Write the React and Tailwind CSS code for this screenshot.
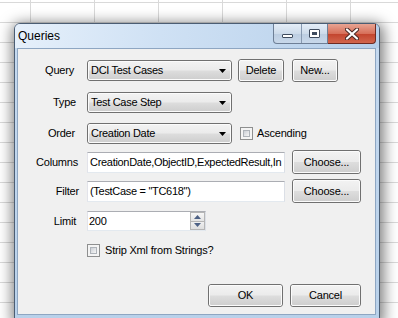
import React from "react";

const btnBg =
  "bg-[linear-gradient(to_bottom,#f2f2f2_0%,#ebebeb_48%,#dddddd_52%,#cfcfcf_100%)]";

function Btn({ children, className = "" }) {
  return (
    <div
      className={`rounded-[3px] border border-[#707070] ${className}`}
    >
      <div
        className={`flex h-full w-full items-center justify-center rounded-[2px] border border-[#fbfbfb] ${btnBg} text-[11px] tracking-[-0.2px] text-black`}
      >
        {children}
      </div>
    </div>
  );
}

function Combo({ text, className = "" }) {
  return (
    <div className={`rounded-[3px] border border-[#707070] ${className}`}>
      <div
        className={`flex h-full w-full items-center rounded-[2px] border border-[#fbfbfb] ${btnBg} pl-[2px] pr-[3px] text-[11px] tracking-[-0.3px] text-black`}
      >
        <span className="flex-1 whitespace-nowrap">{text}</span>
        <svg width="7" height="4" viewBox="0 0 7 4" className="mr-[1px]">
          <path d="M0 0H7L3.5 4Z" fill="#000" />
        </svg>
      </div>
    </div>
  );
}

function TextBox({ text, className = "" }) {
  return (
    <div
      className={`flex items-center overflow-hidden border border-t-[#abadb3] border-l-[#e2e3ea] border-r-[#dbdfe6] border-b-[#e3e9ef] bg-white pl-[2px] text-[11px] tracking-[-0.3px] text-black ${className}`}
    >
      <span className="whitespace-nowrap">{text}</span>
    </div>
  );
}

function Check() {
  return (
    <div className="h-[13px] w-[13px] border border-[#8e8f8f] bg-[#f4f4f4] p-[2px]">
      <div className="h-full w-full border border-[#aeb3b9] bg-[linear-gradient(135deg,#cbcfd5,#f6f6f6)]" />
    </div>
  );
}

function Label({ children, pr }) {
  return (
    <div className={`w-[62px] text-right text-[11px] tracking-[-0.2px] text-black ${pr}`}>
      {children}
    </div>
  );
}

export default function App() {
  return (
    <div
      className="relative h-[318px] w-[398px] overflow-hidden bg-white pl-[14px] pt-[23px] font-['Liberation_Sans',Arial,sans-serif] [background-image:linear-gradient(to_right,#d9d9d9_1px,transparent_1px),linear-gradient(to_bottom,#d9d9d9_1px,transparent_1px)] [background-size:64px_20px] [background-position:30px_2px]"
    >
      {/* window */}
      <div className="flex h-[297px] w-[366px] flex-col rounded-t-[6px] border border-[#4b5d73] bg-[linear-gradient(to_bottom,#c6daf0,#b9d1ea)] pb-[4px] shadow-[1px_3px_14px_3px_rgba(0,0,0,0.5)]">
        {/* title bar */}
        <div className="relative flex h-[24px] items-start rounded-t-[5px] bg-[linear-gradient(100deg,#e6f0fb_0%,#cfe1f4_40%,#b6cfea_100%)]">
          <div className="pl-[3px] pt-[5px] text-[12px] leading-[14px] text-black">
            Queries
          </div>
          <div className="ml-auto mr-[3px] flex h-[20px]">
            <div className="flex h-[20px] w-[55px] overflow-hidden rounded-bl-[4px] border border-t-0 border-[#6e7f96] bg-[linear-gradient(to_bottom,#e4edf7,#cddbea_50%,#bccde1_51%,#c8d8ea)]">
              <div className="flex w-[28px] items-end justify-center border-r border-[#8799b0] pb-[5px]">
                <div className="h-[4px] w-[11px] rounded-[1px] border border-[#3e4b5e] bg-white" />
              </div>
              <div className="flex flex-1 items-center justify-center">
                <div className="h-[9px] w-[11px] rounded-[1px] border border-[#3e4b5e] bg-white p-[2px]">
                  <div className="h-full w-full border border-[#3e4b5e] border-t-[2px] bg-[#d5e0ee]" />
                </div>
              </div>
            </div>
            <div className="flex h-[20px] w-[48px] items-center justify-center rounded-br-[4px] border border-l-0 border-t-0 border-[#6e2a22] bg-[linear-gradient(to_bottom,#e8a493,#d7705a_50%,#c2432d_51%,#d2664d)]">
              <svg width="14" height="12" viewBox="0 0 14 12">
                <path
                  d="M2 1.5L12 10.5M12 1.5L2 10.5"
                  stroke="#4a2a26"
                  strokeWidth="4.2"
                  strokeLinecap="round"
                />
                <path
                  d="M2 1.5L12 10.5M12 1.5L2 10.5"
                  stroke="#fff"
                  strokeWidth="2.2"
                  strokeLinecap="round"
                />
              </svg>
            </div>
          </div>
        </div>
        {/* client area */}
        <div className="ml-[2px] mr-[3px] flex flex-1 flex-col border border-[#8ea6c2] bg-[#f0f0f0]">
          {/* Query */}
          <div className="mt-[10px] flex h-[23px] items-center">
            <Label pr="pr-[6px]">Query</Label>
            <Combo text="DCI Test Cases" className="ml-[7px] h-[21px] w-[145px]" />
            <Btn className="ml-[6px] h-[23px] w-[46px]">Delete</Btn>
            <Btn className="ml-[8px] h-[23px] w-[46px]">New...</Btn>
          </div>
          {/* Type */}
          <div className="mt-[10px] flex h-[21px] items-center">
            <Label pr="pr-[4px]">Type</Label>
            <Combo text="Test Case Step" className="ml-[7px] h-[21px] w-[145px]" />
          </div>
          {/* Order */}
          <div className="mt-[10px] flex h-[21px] items-center">
            <Label pr="pr-[5px]">Order</Label>
            <Combo text="Creation Date" className="ml-[7px] h-[21px] w-[145px]" />
            <div className="ml-[8px]">
              <Check />
            </div>
            <span className="ml-[4px] text-[11px] tracking-[-0.2px] text-black">
              Ascending
            </span>
          </div>
          {/* Columns */}
          <div className="mt-[6px] flex h-[24px] items-center">
            <Label pr="pr-[2px]">Columns</Label>
            <TextBox
              text="CreationDate,ObjectID,ExpectedResult,In"
              className="ml-[7px] h-[21px] w-[198px]"
            />
            <Btn className="ml-[7px] h-[24px] w-[69px]">Choose...</Btn>
          </div>
          {/* Filter */}
          <div className="mt-[5px] flex h-[24px] items-center">
            <Label pr="pr-[1px]">Filter</Label>
            <TextBox
              text={'(TestCase = "TC618")'}
              className="ml-[7px] h-[21px] w-[198px]"
            />
            <Btn className="ml-[7px] h-[24px] w-[69px]">Choose...</Btn>
          </div>
          {/* Limit */}
          <div className="mt-[8px] flex h-[20px] items-center">
            <Label pr="pr-[4px]">Limit</Label>
            <div className="ml-[7px] flex h-[20px] w-[119px] border border-t-[#abadb3] border-l-[#e2e3ea] border-r-[#dbdfe6] border-b-[#e3e9ef] bg-white">
              <div className="flex flex-1 items-center pl-[1px] text-[11px] tracking-[-0.3px] text-black">
                200
              </div>
              <div className="flex w-[15px] flex-col">
                <div className="flex flex-1 items-center justify-center border border-[#b5b5b5] bg-[linear-gradient(to_bottom,#f6f6f6,#e4e4e4)]">
                  <svg width="7" height="4" viewBox="0 0 7 4">
                    <path d="M0 4H7L3.5 0Z" fill="#4d6185" />
                  </svg>
                </div>
                <div className="flex flex-1 items-center justify-center border border-t-0 border-[#b5b5b5] bg-[linear-gradient(to_bottom,#f0f0f0,#dedede)]">
                  <svg width="7" height="4" viewBox="0 0 7 4">
                    <path d="M0 0H7L3.5 4Z" fill="#4d6185" />
                  </svg>
                </div>
              </div>
            </div>
          </div>
          {/* Strip */}
          <div className="mt-[13px] flex h-[13px] items-center pl-[69px]">
            <Check />
            <span className="ml-[5px] text-[11px] tracking-[-0.2px] text-black">
              Strip Xml from Strings?
            </span>
          </div>
          {/* OK / Cancel */}
          <div className="mt-[27px] flex h-[23px] pl-[190px]">
            <Btn className="h-[23px] w-[75px]">OK</Btn>
            <Btn className="ml-[7px] h-[23px] w-[71px]">Cancel</Btn>
          </div>
        </div>
      </div>
    </div>
  );
}
